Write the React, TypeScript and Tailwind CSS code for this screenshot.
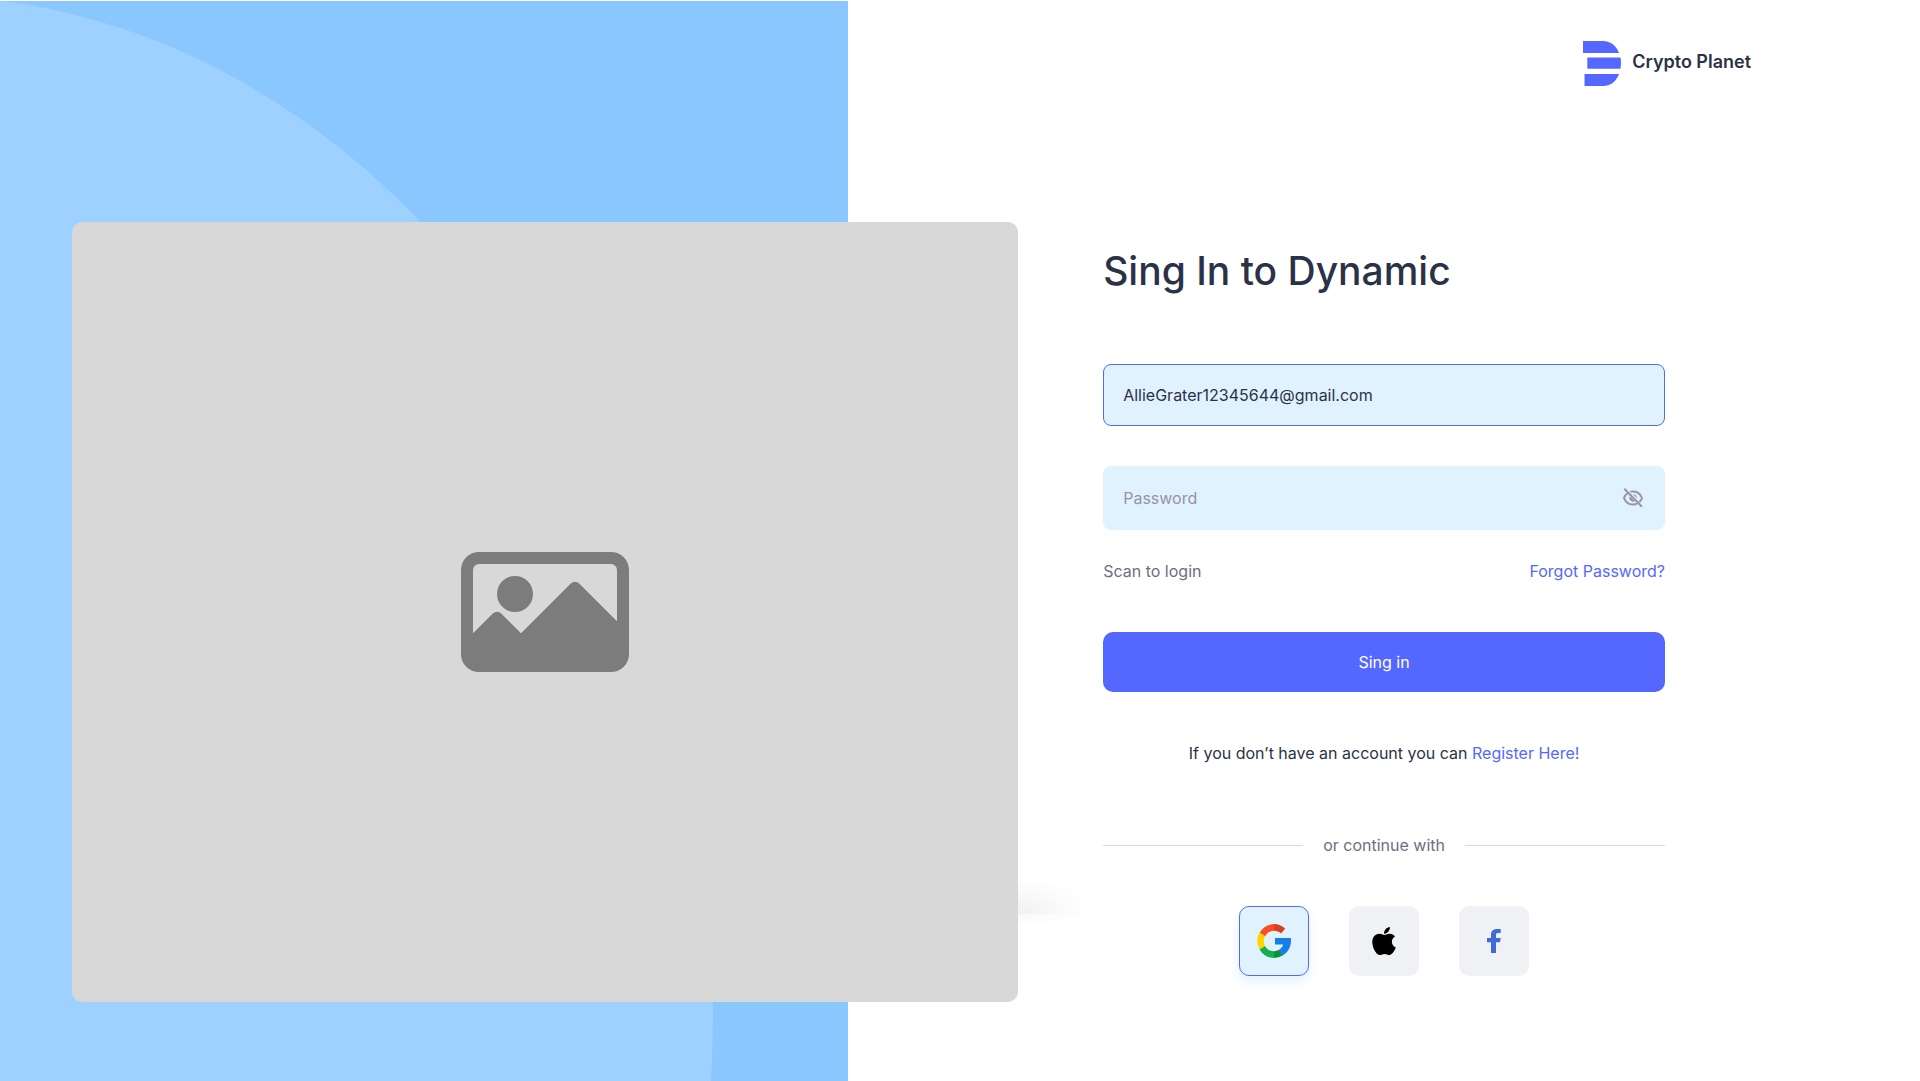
import { useState } from "react";

const font = "font-['Inter','Liberation_Sans',sans-serif]";

function Logo() {
  return (
    <div className="flex items-center gap-[11px]">
      <svg viewBox="0 0 38 45" className="h-[45px] w-[38px]" fill="#5468ff" aria-hidden="true">
        <path d="M0 0H20C28 0 33.500 5 36 12H0Z" />
        <path d="M4.300 16.500H37.500C38.200 20.500 38.100 24 37.500 27.700H4.300Z" />
        <path d="M1.500 33H36C33.500 39.500 28.500 45 20 45H1.500Z" />
      </svg>
      <span className="pb-1 text-lg leading-6 font-semibold text-[#2b3248]">Crypto Planet</span>
    </div>
  );
}

function PictureIcon() {
  return (
    <svg viewBox="0 0 28 20" className="w-[168px]" aria-hidden="true">
      <path
        fill="#7c7c7c"
        fillRule="evenodd"
        d="M3 0H25A3 3 0 0 1 28 3V17A3 3 0 0 1 25 20H3A3 3 0 0 1 0 17V3A3 3 0 0 1 3 0ZM2 13.550L5.300 10.250Q6 9.700 6.700 10.250L10 13.550L18.300 5.250Q19 4.700 19.700 5.250L26 11.550V3A1 1 0 0 0 25 2H3A1 1 0 0 0 2 3Z"
      />
      <circle cx="9" cy="7" r="3" fill="#7c7c7c" />
    </svg>
  );
}

function EyeOffIcon() {
  return (
    <svg viewBox="0 0 20 20" className="size-5" fill="none" stroke="#9694a6" strokeWidth="2" aria-hidden="true">
      <path d="M5 5C3 6.200 1.400 8 1 10C2.300 14 5.800 16.500 10 16.500C11.600 16.500 13 16.200 14.200 15.600" />
      <path d="M7.500 3.800C13 2.500 17.500 5.500 19 10C18.500 11.600 17.600 13 16.300 14" />
      <path d="M6.800 8.200A3.700 3.700 0 0 0 11.800 13.200Z" fill="#9694a6" stroke="none" />
      <path d="M10 6.300A3.700 3.700 0 0 1 13.700 10Z" fill="#9694a6" stroke="none" />
      <path d="M1.300 0.800L19 18.800" />
    </svg>
  );
}

function GoogleIcon() {
  return (
    <svg viewBox="0 0 34 34" className="size-[34px]" aria-hidden="true">
      <path fill="#ff4b26" d="M17 0A17 17 0 0 0 2.600 9L8 12.500A10.200 10.200 0 0 1 17 6.800Z" />
      <path fill="#d93f21" d="M17 0V6.800C19.800 6.800 22.200 7.900 24 9.500L28.300 4.600A17 17 0 0 0 17 0Z" />
      <path fill="#ffd500" d="M2.600 8.600A17 17 0 0 0 2.600 25.400L8 21.900A10.200 10.200 0 0 1 8 12.100Z" />
      <path fill="#14b04a" d="M17 34A17 17 0 0 1 2.600 25.400L8 21.900A10.200 10.200 0 0 0 17 27.200Z" />
      <path fill="#0f9039" d="M17 34V27.200C19 27.200 20.500 26.700 21.900 25.800L26 31.300A17 17 0 0 1 17 34Z" />
      <path fill="#167ee6" d="M18 14H34V17C34 23 30.900 28.300 26 31.300L21.500 26.200C23.800 24.800 25.400 22.800 26.200 20.500H18Z" />
    </svg>
  );
}

function AppleIcon() {
  return (
    <svg viewBox="0 0 376 512" className="h-8" aria-hidden="true">
      <path d="M318.700 268.700c-.2-36.700 16.400-64.400 50-84.800-18.800-26.900-47.200-41.700-84.700-44.600-35.500-2.800-74.300 20.700-88.500 20.700-15 0-49.400-19.700-76.400-19.700C63.300 141.200 4 184.800 4 273.500q0 39.300 14.400 81.200c12.800 36.700 59 126.700 107.200 125.200 25.200-.6 43-17.900 75.800-17.900 31.800 0 48.300 17.900 76.400 17.900 48.600-.7 90.400-82.500 102.600-119.300-65.200-30.700-61.700-90-61.700-91.900zm-56.600-164.200c27.300-32.400 24.800-61.900 24-72.500-24.100 1.400-52 16.400-67.900 34.900-17.500 19.800-27.800 44.300-25.600 71.900 26.100 2 49.900-11.400 69.500-34.300z" />
    </svg>
  );
}

function FacebookIcon() {
  return (
    <svg viewBox="0 0 14 24" className="h-6 w-[14px]" fill="#3f6ad8" aria-hidden="true">
      <path d="M4 24V13.300H0V9H4V6C4 2 6.300 0 10 0H13.700V4H11C9.400 4 9 4.700 9 6V9H13.700L13 13.300H9V24Z" />
    </svg>
  );
}

const socials = [
  { label: "Google", icon: <GoogleIcon />, active: true },
  { label: "Apple", icon: <AppleIcon />, active: false },
  { label: "Facebook", icon: <FacebookIcon />, active: false },
];

function SignInForm() {
  const [email, setEmail] = useState("AllieGrater12345644@gmail.com");
  const [password, setPassword] = useState("");
  const [visible, setVisible] = useState(false);

  return (
    <form className="w-full pt-[25px] text-base leading-6 text-[#2b3248]" onSubmit={(e) => e.preventDefault()}>
      <h1 className="text-[39px] leading-12 font-medium">Sing In to Dynamic</h1>
      <input
        type="email"
        aria-label="Email"
        value={email}
        onChange={(e) => setEmail(e.target.value)}
        className="mt-[69px] block h-[62px] w-full rounded-lg border border-[#5468ff] bg-[#e1f2ff] px-[19px] outline-none"
      />
      <div className="mt-10 flex h-16 items-center rounded-lg bg-[#e1f2ff] pr-[22px] pl-5">
        <input
          type={visible ? "text" : "password"}
          aria-label="Password"
          placeholder="Password"
          value={password}
          onChange={(e) => setPassword(e.target.value)}
          className="min-w-0 flex-1 bg-transparent outline-none placeholder:text-[#9694a6]"
        />
        <button type="button" aria-label="Show password" onClick={() => setVisible(!visible)}>
          <EyeOffIcon />
        </button>
      </div>
      <div className="mt-[29px] flex justify-between">
        <a href="#scan" className="text-[#6f6d82]">Scan to login</a>
        <a href="#forgot" className="text-[#5468ff]">Forgot Password?</a>
      </div>
      <button type="submit" className="mt-[49px] block h-[60px] w-full rounded-[10px] bg-[#5468ff] text-white">
        Sing in
      </button>
      <p className="mt-[49px] text-center">
        If you don’t have an account you can <a href="#register" className="text-[#5468ff]">Register Here!</a>
      </p>
      <div className="mt-17 flex items-center gap-5 text-[#6f6d82]">
        <span className="h-px flex-1 bg-[#d9d8e6]" />
        or continue with
        <span className="h-px flex-1 bg-[#d9d8e6]" />
      </div>
      <div className="mt-[49px] flex justify-center gap-10">
        {socials.map((s) => (
          <button
            key={s.label}
            type="button"
            aria-label={s.label}
            className={
              s.active
                ? "flex size-[70px] items-center justify-center rounded-[10px] border border-[#5468ff] bg-[#e1f2ff] shadow-[0_6px_12px_#e1f2ff]"
                : "flex size-[70px] items-center justify-center rounded-[10px] bg-[#f0f1f5]"
            }
          >
            {s.icon}
          </button>
        ))}
      </div>
    </form>
  );
}

export default function App() {
  return (
    <div className={`relative min-h-screen overflow-hidden bg-white ${font}`}>
      <div className="absolute top-px bottom-0 left-0 w-[44.17%] overflow-hidden bg-[#8bc7ff]">
        <div className="absolute top-[-5px] left-[-866px] h-[2024px] w-[1579px] rounded-[50%] bg-[#9ed1ff]" />
      </div>
      <div className="relative flex min-h-screen flex-col">
        <header className="flex justify-end pt-[41px] pr-[8.8%]">
          <Logo />
        </header>
        <main className="mt-[136px] flex pl-[3.75%]">
          <section className="relative w-[51.2%]">
            <div className="absolute top-[655px] -right-[72px] h-[37px] w-36 bg-[radial-gradient(ellipse_at_bottom,#f1f1f1,#ffffff_70%)]" />
            <div className="absolute top-[692px] -right-[72px] h-3 w-36 bg-[radial-gradient(ellipse_at_top,#f9f9f9,#ffffff_70%)]" />
            <div className="relative flex h-[780px] items-center justify-center rounded-[10px] bg-[#d8d8d8]">
              <PictureIcon />
            </div>
          </section>
          <div className="ml-[4.6%] w-[30.4%]">
            <SignInForm />
          </div>
        </main>
      </div>
    </div>
  );
}
